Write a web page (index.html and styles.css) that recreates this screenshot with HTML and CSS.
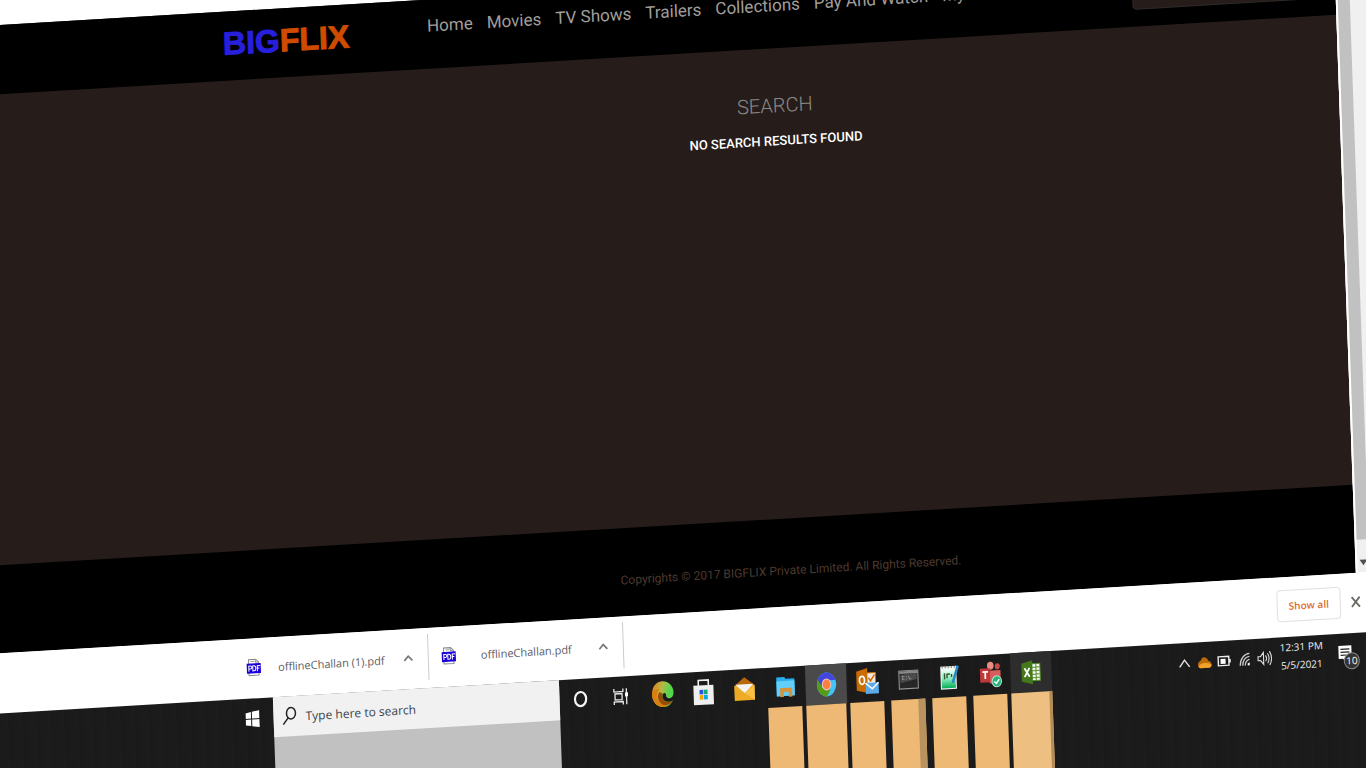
FILE: index.html
```html
<!DOCTYPE html>
<html lang="en">
<head>
<meta charset="utf-8">
<title>BIGFLIX - Search</title>
<link rel="stylesheet" href="styles.css">
</head>
<body>
<div class="scene">
  <div class="toolbar"></div>
  <div class="window">
    <div class="page">
      <header class="header">
        <a class="logo" href="#"><span class="logo-big">BIG</span><span class="logo-flix">FLIX</span></a>
        <nav class="nav">
          <a href="#">Home</a><a href="#">Movies</a><a href="#">TV Shows</a><a href="#">Trailers</a><a href="#">Collections</a><a href="#">Pay And Watch</a><a href="#">My Account</a>
        </nav>
        <input class="site-search" type="text" aria-label="Search BIGFLIX">
      </header>
      <main class="main">
        <h1 class="title">SEARCH</h1>
        <p class="message">NO SEARCH RESULTS FOUND</p>
      </main>
      <footer class="footer">Copyrights © 2017 BIGFLIX Private Limited. All Rights Reserved.</footer>
    </div>
    <div class="scrollbar">
      <div class="thumb"></div>
      <svg class="arrow" width="8" height="6" viewBox="0 0 8 6"><path d="M0 0h8L4 6z" fill="#505050"/></svg>
    </div>
  </div>

  <div class="shelf">
    <button class="download" type="button">
      <svg width="16" height="18" viewBox="0 0 16 18"><path d="M3 17V1h7l3 3v13z" fill="#fff" stroke="#888"/><path d="M5 3h4M10 1v3h3" stroke="#999" fill="none"/><rect x="1" y="5" width="14" height="10" fill="#1a00d8"/><path d="M3 13V7.500h1.500q1.500 0 1.500 1.500T4.500 10.500H3M7 7.500V12.500h1q2 0 2-2.500T8 7.500zM11.500 13V7.500h3M11.500 10h2" stroke="#fff" fill="none"/></svg>
      <span class="download-name">offlineChallan (1).pdf</span>
      <svg width="15" height="12" viewBox="0 0 15 12"><path d="M3.500 8.500l4-4.500 4 4.500" stroke="#777" stroke-width="1.700" fill="none"/></svg>
    </button>
    <button class="download" type="button">
      <svg width="16" height="18" viewBox="0 0 16 18"><path d="M3 17V1h7l3 3v13z" fill="#fff" stroke="#888"/><path d="M5 3h4M10 1v3h3" stroke="#999" fill="none"/><rect x="1" y="5" width="14" height="10" fill="#1a00d8"/><path d="M3 13V7.500h1.500q1.500 0 1.500 1.500T4.500 10.500H3M7 7.500V12.500h1q2 0 2-2.500T8 7.500zM11.500 13V7.500h3M11.500 10h2" stroke="#fff" fill="none"/></svg>
      <span class="download-name">offlineChallan.pdf</span>
      <svg width="15" height="12" viewBox="0 0 15 12"><path d="M3.500 8.500l4-4.500 4 4.500" stroke="#777" stroke-width="1.700" fill="none"/></svg>
    </button>
    <button class="show-all" type="button">Show all</button>
    <button class="close" type="button" aria-label="Close"><svg width="10" height="12" viewBox="0 0 10 12"><path d="M1 1l8 10M9 1L1 11" stroke="#6a6a64" stroke-width="1.800"/></svg></button>
  </div>

  <div class="taskbar">
    <button class="start" type="button" aria-label="Start"><svg width="14" height="17" viewBox="0 0 14 17"><path d="M0 2.500l5.500-1V8H0zM6.500 1.300L14 0v8H6.500zM0 9h5.500v6.500L0 14.500zM6.500 9H14v8l-7.500-1.300z" fill="#fff"/></svg></button>
    <div class="find">
      <label class="find-box">
        <svg width="16" height="20" viewBox="0 0 16 20"><ellipse cx="9.500" cy="7" rx="4.500" ry="5.700" fill="none" stroke="#222" stroke-width="1.500"/><path d="M6.500 11.500L1.500 18" stroke="#222" stroke-width="1.500"/></svg>
        <input class="find-input" type="text" aria-label="Type here to search" placeholder="Type here to search">
      </label>
    </div>
    <div class="slot"><button class="app" type="button" aria-label="Cortana"><svg width="24" height="28" viewBox="0 0 24 28"><ellipse cx="12" cy="14" rx="5.600" ry="7" fill="none" stroke="#f2f2f2" stroke-width="2.200"/></svg></button></div>
    <div class="slot"><button class="app" type="button" aria-label="Task view"><svg width="24" height="28" viewBox="0 0 24 28"><path d="M4.500 6v3h9V6M4.500 22v-3h9v3M5.500 11h7v6h-7zM17 6v16" fill="none" stroke="#e8e8e8" stroke-width="1.300"/><path d="M15.500 10h3v4h-3z" fill="#fff"/></svg></button></div>
    <div class="slot"><button class="app" type="button" aria-label="Edge"><svg width="24" height="28" viewBox="0 0 24 28"><defs><linearGradient id="eg" y2=".3"><stop offset=".1" stop-color="#d98a1c"/><stop offset=".5" stop-color="#b5b846"/><stop offset=".85" stop-color="#55d64c"/></linearGradient></defs><path d="M12 1C5 1 1.500 7 1.500 14S6 27 13 27c4 0 7-2 9-6-3 2-8 1-9.500-2-1.500-3-.500-6 1.500-6 1 0 1.500 1 1.500 2.500 0 2 1.500 3 3.500 3 2.500 0 4-3 4-6C23 6 18 1 12 1z" fill="url(#eg)"/><path d="M1.500 14C1.500 9 6 8 9 9.500c-3 2-3.500 7-1.500 10.500 2 4 6 5 10 5.500C9 30 1.500 23 1.500 14z" fill="#d97f10"/><path d="M9 12c-3 3-2 9 2 12 4 2.500 9 1 11-3-3 2-8 1-9.500-2-1-2-1.500-4-.500-6z" fill="#9a4d08"/></svg></button></div>
    <div class="slot"><button class="app" type="button" aria-label="Store"><svg width="24" height="28" viewBox="0 0 24 28"><path d="M7 8V2.500h10V8" fill="none" stroke="#eee" stroke-width="1.600"/><path d="M2 7.500h20V27H2z" fill="#eee"/><path d="M8 12h3.700v4.500H8z" fill="#2853e8"/><path d="M12.300 12H16v4.500h-3.700z" fill="#14a878"/><path d="M8 17.200h3.700v4.500H8z" fill="#f9a300"/><path d="M12.300 17.200H16v4.500h-3.700z" fill="#00a8f5"/></svg></button></div>
    <div class="slot"><button class="app" type="button" aria-label="Mail"><svg width="24" height="28" viewBox="0 0 24 28"><path d="M2 10l10-8 10 8z" fill="#b96607"/><path d="M2 10h20v15H2z" fill="#f0ac25"/><path d="M3 9h18l-9 9z" fill="#f3f3f3"/><path d="M2 10l10 8 10-8v15z" fill="#f8c047"/><path d="M2 10v15l10-7z" fill="#ecaa24"/></svg></button></div>
    <div class="slot"><button class="app" type="button" aria-label="File Explorer"><svg width="24" height="28" viewBox="0 0 24 28"><path d="M3 4h8l1 2h9v17H3z" fill="#28aeed"/><path d="M3 8h18v15H3z" fill="#61cff9"/><path d="M6.500 24v-9h12v9h-3.500v-5h-5v5z" fill="#d7933b"/></svg></button><span class="trail"></span></div>
    <div class="slot"><button class="app app-active" type="button" aria-label="Chrome"><svg width="24" height="28" viewBox="0 0 24 28"><defs><clipPath id="cc"><ellipse cx="12" cy="14" rx="9.700" ry="12"/></clipPath></defs><g clip-path="url(#cc)"><path d="M0 0h24v28H0z" fill="#43c3fa"/><path d="M0 0h24v10H12l-5 6L0 8z" fill="#4246dd"/><path d="M0 7l3 1 5 9 4 2h4l-5 9H0z" fill="#559d18"/></g><ellipse cx="12" cy="14" rx="4.800" ry="6" fill="#e9c9bd"/><ellipse cx="12" cy="14" rx="3.800" ry="4.900" fill="#fb7e43"/></svg></button><span class="trail trail-wide"></span></div>
    <div class="slot"><button class="app" type="button" aria-label="Outlook"><svg width="24" height="28" viewBox="0 0 24 28"><path d="M11 5h9v12h-9z" fill="#f5eadc" stroke="#c96d05"/><path d="M13 10l2 3 4-6" fill="none" stroke="#c96d05" stroke-width="1.500"/><path d="M1 3l11-3v25L1 22z" fill="#cb6c02"/><ellipse cx="6.500" cy="12" rx="2.500" ry="4" fill="none" stroke="#fff" stroke-width="1.700"/><path d="M10 15h13v11H10z" fill="#5baae9"/><path d="M10 15l6.500 6 6.500-6" fill="none" stroke="#fff" stroke-width="1.500"/></svg></button><span class="trail"></span></div>
    <div class="slot"><button class="app" type="button" aria-label="Command Prompt"><svg width="24" height="28" viewBox="0 0 24 28"><path d="M2.500 5h19v18h-19z" fill="#272727" stroke="#999"/><path d="M3 5.500h18v2.500H3z" fill="#888"/><path d="M4 9l16-1v6L4 17z" fill="#4c4c4c"/><path d="M8 10.500H6v3h2M10 10.500v1M10 13v1M12 10.500l1 3h2" fill="none" stroke="#888"/></svg></button><span class="trail trail-shaded"></span></div>
    <div class="slot"><button class="app" type="button" aria-label="Notepad++"><svg width="24" height="28" viewBox="0 0 24 28"><defs><linearGradient id="ng" x2="0" y2="1"><stop offset="0" stop-color="#f4fff8"/><stop offset=".5" stop-color="#8aedb9"/><stop offset="1" stop-color="#07ad58"/></linearGradient></defs><path d="M3 3h16v23H3z" fill="#f2f5f2"/><path d="M4 6h14v19H4z" fill="url(#ng)"/><path d="M5 3v2m3-2v2m3-2v2m3-2v2m3-2v2" stroke="#777"/><path d="M7 10v6M9.500 15v-4h3M14 14v-3" stroke="#353" fill="none" stroke-width="1.400"/><path d="M20.500 3L15 20" stroke="#2688c8" stroke-width="2.500"/></svg></button><span class="trail"></span></div>
    <div class="slot"><button class="app" type="button" aria-label="Teams"><svg width="24" height="28" viewBox="0 0 24 28"><ellipse cx="12" cy="5" rx="3.300" ry="4" fill="#eb8c83"/><ellipse cx="19" cy="6" rx="2.500" ry="3" fill="#c84b48"/><path d="M9 10h13v9q-1 5-6 5-6 0-7-6z" fill="#d75e5c"/><path d="M1.500 7.500h10v14h-10z" fill="#bd393b"/><path d="M4 11h5.500M6.700 11v7" stroke="#fff" stroke-width="1.700"/><ellipse cx="18" cy="21" rx="4.700" ry="5.500" fill="#20b778" stroke="#b9dfcc"/><path d="M15.500 21l2 2 3-4" fill="none" stroke="#fff" stroke-width="1.500"/></svg></button><span class="trail"></span></div>
    <div class="slot"><button class="app app-dim" type="button" aria-label="Excel"><svg width="24" height="28" viewBox="0 0 24 28"><path d="M12 5.500h8.500v17H12z" fill="#f4f8ef" stroke="#518b25"/><path d="M12 9h8M12 12.500h8M12 16h8M12 19.500h8M16.500 6v16" stroke="#518b25"/><path d="M2 5l11-3v24L2 23z" fill="#43791a"/><path d="M5 9.500l5 9M10 9.500l-5 9" stroke="#fff" stroke-width="1.800"/></svg></button><span class="trail trail-last"></span></div>
    <div class="tray">
      <svg width="20" height="20" viewBox="0 0 20 20"><path d="M5 14l5-7 5 7" fill="none" stroke="#e5e5e5" stroke-width="1.400"/></svg>
      <svg width="20" height="20" viewBox="0 0 20 20"><path d="M3.500 14q-1-4 3-6 1-4 5-2 2 1 2 3 4 1 3 5-1 2-2 2H6q-2 0-2.500-2z" fill="#bf6b05"/><path d="M4 14q2-3 6-3 6 0 7 2 0 3-3 3H6q-2 0-2-2z" fill="#f0a22a"/></svg>
      <svg width="20" height="20" viewBox="0 0 20 20"><path d="M3.700 5.700h10.600v9H3.700zM15.500 8.500v3.500" fill="none" stroke="#eee" stroke-width="1.400"/><path d="M6 8h5v5H6z" fill="#fff"/></svg>
      <svg width="20" height="20" viewBox="0 0 20 20"><path d="M5.500 16C5.500 9 10 4 15 4M8 16c0-5 3-9 7-9M10.500 16c0-3 2-6 4.500-6" fill="none" stroke="#ccc" stroke-width="1.300"/><path d="M13 16v-2l2-1v3z" fill="#fff"/></svg>
      <svg width="20" height="20" viewBox="0 0 20 20"><path d="M3.500 8H6l3-4v12l-3-4H3.500zM11 7q2 3 0 6M13 5q3 5 0 10M15 3q4 7 0 14" fill="none" stroke="#ddd" stroke-width="1.100"/></svg>
      <div class="clock"><time>12:31 PM</time><time>5/5/2021</time></div>
      <button class="notices" type="button" aria-label="Notifications"><svg width="15" height="18" viewBox="0 0 15 18"><path d="M1 1h13v13H9v3l-4-3H1z" fill="#fff"/><path d="M3 4.500h9M3 7.500h9M3 10.500h6" stroke="#222" stroke-width="1.200"/></svg><span class="badge">10</span></button>
    </div>
  </div>
</div>
</body>
</html>
```
FILE: styles.css
```css
* { box-sizing: border-box; }

body {
  margin: 0;
  height: 100vh;
  overflow: hidden;
  background: #fff;
  font-family: Roboto, "Liberation Sans", sans-serif;
}

button {
  padding: 0;
  border: 0;
  background: none;
  font-family: inherit;
}

svg { display: block; flex: none; }
a { text-decoration: none; }

/* The tilted desktop bleeds 40px past both sides of the window. */
.scene {
  display: flex;
  flex-direction: column;
  width: calc(100% + 80px);
  height: calc(100vh + 84px);
  margin-left: -40px;
  transform: skew(2deg, -3.4deg);
  transform-origin: 40px 0;
}

.toolbar { flex: none; height: 25px; background: #fff; }

.window { display: flex; flex: 1; min-height: 0; }

.page {
  display: flex;
  flex: 1;
  flex-direction: column;
  background: #261d1a;
}

.header {
  display: flex;
  align-items: center;
  height: 69px;
  padding: 0 0 6px 261px;
  background: #000;
}

.logo {
  font: bold 32px/36px "Liberation Sans", sans-serif;
  -webkit-text-stroke: 1px currentColor;
}

.logo-big { color: #271fdc; }
.logo-flix { color: #cf4b00; }

.nav {
  display: flex;
  gap: 14px;
  margin-left: 78px;
  padding-bottom: 12px;
  white-space: nowrap;
}

.nav a { color: #a19e9b; font-size: 17px; line-height: 24px; }

.site-search {
  width: 203px;
  height: 40px;
  margin-left: auto;
  border: 1px solid #2e2a29;
  border-radius: 4px;
  background: #261d1a;
}

.main {
  display: flex;
  flex: 1;
  flex-direction: column;
  align-items: center;
  gap: 12px;
  padding: 43px 0 0 246px;
}

.title {
  margin: 0;
  color: #8d8884;
  font-size: 20px;
  font-weight: 300;
  line-height: 28px;
}

.message {
  margin: 0;
  color: #fff;
  font-size: 13px;
  font-weight: 500;
  line-height: 20px;
}

.footer {
  height: 88px;
  padding: 42px 0 0 246px;
  background: #000;
  color: #4c392f;
  font-size: 12px;
  line-height: 20px;
  text-align: center;
}

.scrollbar {
  display: flex;
  flex-direction: column;
  width: 73px;
  padding-bottom: 7px;
  border-left: 2px solid #fff;
  background: #f0f0f0;
}

.thumb { flex: 1; width: 12px; background: #c1c1c1; }
.arrow { margin: 20px 0 0 2px; }

.shelf {
  display: flex;
  flex: none;
  align-items: center;
  height: 60px;
  padding: 0 69px 2px 250px;
  background: #fff;
  font-family: "Open Sans", "Noto Sans", sans-serif;
}

.download {
  display: flex;
  align-items: center;
  width: 195px;
  height: 46px;
  padding: 0 12px;
  border-right: 1px solid #ccc;
}

.download-name { flex: 1; color: #5c5c66; font-size: 11px; text-align: center; }

.show-all {
  width: 64px;
  height: 32px;
  margin-left: auto;
  border: 1px solid #e5dede;
  border-radius: 4px;
  color: #e0692c;
  font-size: 10px;
  font-weight: 600;
}

.close { margin-left: 10px; }

.taskbar {
  display: flex;
  flex: none;
  height: 140px;
  padding: 0 71px 0 245px;
  background: repeating-linear-gradient(90deg, #1b1b1b 0 7px, #1c1c1c 7px 9px, #1a1a1a 9px 14px);
  font-family: "Open Sans", "Noto Sans", sans-serif;
}

.start { display: grid; place-items: center; width: 43px; height: 40px; }

.find { width: 286px; background: #c1c1c1; }

.find-box {
  display: flex;
  align-items: center;
  gap: 8px;
  height: 40px;
  padding-left: 8px;
  background: #f1f1f1;
}

.find-input {
  flex: 1;
  min-width: 0;
  padding: 0;
  border: 0;
  background: none;
  font: 12px "Open Sans", "Noto Sans", sans-serif;
}

.find-input::placeholder { color: #3a424c; }

.slot { display: flex; flex-direction: column; width: 41px; }

.app { display: grid; flex: none; place-items: center; height: 40px; }
.app-active { background: #4a4a4a; }
.app-dim { background: #2d2d2d; }

.trail { flex: 1; margin: 0 4px 0 3px; background: #edb975; }
.trail-wide { margin: 0 1px 0 0; }
.trail-shaded { border-right: 7px solid #b9935f; }
.trail-last { margin: 0; border-right: 3px solid #b48c58; background: #edc082; }

.tray { display: flex; align-items: center; height: 40px; margin-left: auto; }

.clock {
  display: flex;
  flex-direction: column;
  align-items: center;
  width: 54px;
  padding-bottom: 2px;
  color: #f0f0f0;
  font-size: 10px;
  line-height: 18px;
}

.notices { position: relative; display: grid; place-items: center; width: 32px; height: 40px; }

.badge {
  position: absolute;
  top: 19px;
  left: 15px;
  width: 16px;
  height: 17px;
  border: 1px solid #888;
  border-radius: 50%;
  background: #333;
  color: #fff;
  font-size: 10px;
  line-height: 15px;
}
```
